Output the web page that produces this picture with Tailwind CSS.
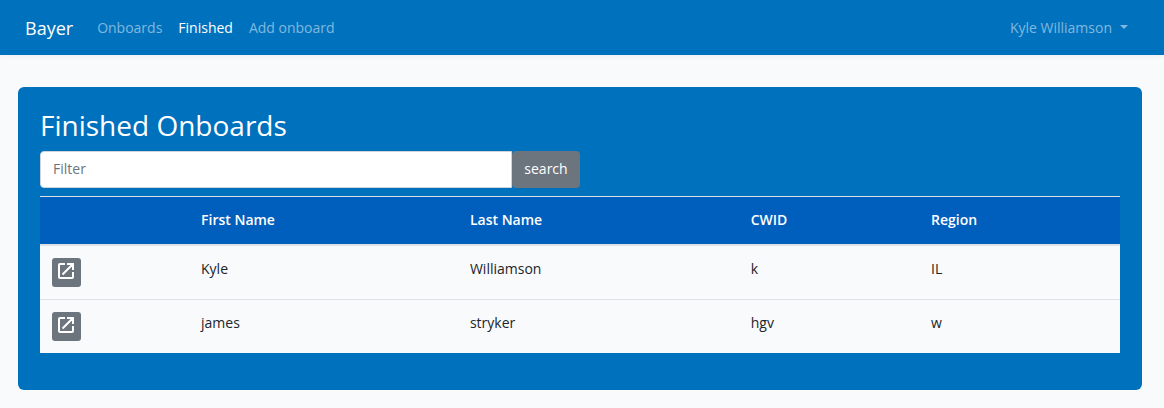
<!DOCTYPE html>
<html lang="en">
<head>
<meta charset="utf-8">
<meta name="viewport" content="width=device-width, initial-scale=1">
<title>Finished Onboards</title>
<script src="https://cdn.jsdelivr.net/npm/@tailwindcss/browser@4"></script>
</head>
<body class="min-h-screen bg-[#f8fafc] font-['Open_Sans',sans-serif] text-sm text-[#212529]">
<svg class="hidden" aria-hidden="true">
  <symbol id="open" viewBox="0 0 16 16"><path fill="none" stroke="currentColor" stroke-width="2" stroke-linejoin="round" d="M7 1H2Q1 1 1 2V14Q1 15 2 15H14Q15 15 15 14V9M9 1H16M15 1V7M4.500 11.500L15 1"/></symbol>
</svg>
<nav class="flex h-[55px] items-center bg-[#0071bd] pr-9 pl-[25px] font-medium shadow-[0_2px_4px_rgba(0,0,0,0.04)]">
  <a href="#" class="mr-6 text-lg font-normal text-white">Bayer</a>
  <div class="flex gap-4">
    <a href="#" class="text-white/50">Onboards</a>
    <a href="#" aria-current="page" class="text-white">Finished</a>
    <a href="#" class="text-white/50">Add onboard</a>
  </div>
  <button type="button" aria-haspopup="menu" class="ml-auto flex items-center gap-2 text-white/50">Kyle Williamson
    <svg class="mb-0.5 h-1 w-2" viewBox="0 0 8 4" fill="currentColor" aria-hidden="true"><path d="M0 0h8L4 4z"/></svg>
  </button>
</nav>
<main class="mt-8 mr-[22px] ml-[18px] rounded-md bg-[#0071bd] px-[22px] pt-[21px] pb-[37px]">
  <h1 class="mb-2 text-[28px] leading-[35px] text-white">Finished Onboards</h1>
  <form class="mb-2 flex w-1/2">
    <input type="text" aria-label="Filter" placeholder="Filter" class="h-[37px] min-w-0 flex-1 rounded-l border border-[#ced4da] bg-white px-3 pb-0.5 placeholder:text-[#6c757d]">
    <button type="button" class="h-[37px] w-[68px] rounded bg-[#6c757d] pb-0.5 font-medium text-white">search</button>
  </form>
  <table class="w-full table-fixed border-separate border-spacing-0 bg-[#f8fafc] text-left">
    <colgroup><col class="w-[13.8%]"><col class="w-[24.9%]"><col class="w-[26%]"><col class="w-[16.7%]"><col></colgroup>
    <thead class="bg-[#005ebd] leading-[23px] text-white [&_th]:border-t [&_th]:border-b-2 [&_th]:border-[#dee2e6] [&_th]:px-3 [&_th]:pt-[11px] [&_th]:pb-[13px] [&_th]:font-semibold">
      <tr><td class="border-t border-b-2 border-[#dee2e6]"></td><th scope="col">First Name</th><th scope="col">Last Name</th><th scope="col">CWID</th><th scope="col">Region</th></tr>
    </thead>
    <tbody class="leading-[23px] [&_td]:px-3 [&_td]:pt-[11px] [&_td]:pb-3 [&_td]:align-top [&_td:first-child]:pt-3">
      <tr>
        <td><button type="button" aria-label="Open Kyle Williamson" class="flex size-[29px] items-center justify-center rounded-[3px] bg-[#6c757d] pr-px pb-[3px] text-white"><svg class="size-4"><use href="#open"/></svg></button></td>
        <td>Kyle</td><td>Williamson</td><td>k</td><td>IL</td>
      </tr>
      <tr class="[&_td]:border-t [&_td]:border-[#dee2e6]">
        <td><button type="button" aria-label="Open james stryker" class="flex size-[29px] items-center justify-center rounded-[3px] bg-[#6c757d] pr-px pb-[3px] text-white"><svg class="size-4"><use href="#open"/></svg></button></td>
        <td>james</td><td>stryker</td><td>hgv</td><td>w</td>
      </tr>
    </tbody>
  </table>
</main>
</body>
</html>
